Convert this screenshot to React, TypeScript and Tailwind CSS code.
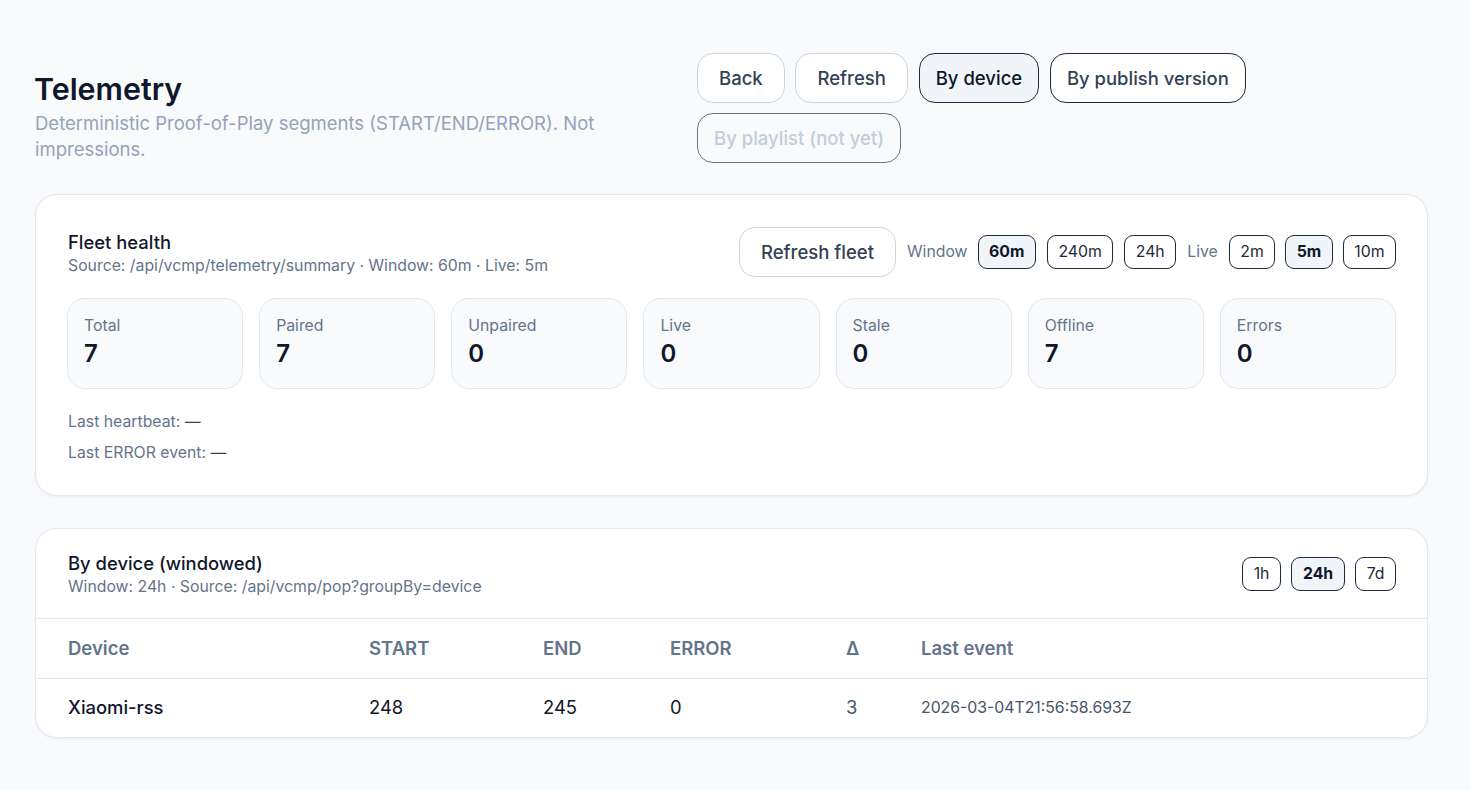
import React from "react";

function NavBtn({ label, active, outline, disabled }: { label: string; active?: boolean; outline?: boolean; disabled?: boolean }) {
  if (disabled)
    return (
      <button className="h-[50px] px-4 pt-[1px] rounded-[16px] border border-[#6b7280] bg-[#f8fafc] text-[18.5px] font-medium text-[#c4ccd8]">
        {label}
      </button>
    );
  if (active)
    return (
      <button className="h-[50px] px-4 pt-[1px] rounded-[16px] border border-[#1e293b] bg-[#f1f5f9] text-[18.5px] font-medium text-[#0f172a]">
        {label}
      </button>
    );
  if (outline)
    return (
      <button className="h-[50px] px-4 pt-[1px] rounded-[16px] border border-[#1e293b] bg-white text-[18.45px] font-medium text-[#334155]">
        {label}
      </button>
    );
  return (
    <button className="h-[50px] px-[21px] pt-[1px] rounded-[16px] border border-[#cbd5e1] bg-white text-[18.5px] font-medium text-[#334155]">
      {label}
    </button>
  );
}

function Chip({ label, active }: { label: string; active?: boolean }) {
  return (
    <button
      className={
        active
          ? "h-[34px] px-[10.5px] rounded-[9px] border border-[#1e293b] bg-[#f1f5f9] text-[15.8px] font-bold text-[#0f172a]"
          : "h-[34px] px-[10.5px] rounded-[9px] border border-[#1e293b] bg-white text-[15.8px] font-normal text-[#1e293b]"
      }
    >
      {label}
    </button>
  );
}

function Stat({ label, value }: { label: string; value: string }) {
  return (
    <div className="h-[91px] rounded-[18px] border border-[#e2e8f0] bg-[#f8fafc] px-4 pt-[17px]">
      <div className="text-[15.8px] leading-[20px] text-[#64748b]">{label}</div>
      <div className="mt-[2px] text-[24px] leading-[32px] font-semibold text-[#0f172a]">{value}</div>
    </div>
  );
}

export default function App() {
  return (
    <div className="min-h-[790px] bg-[#f8fafc] pl-[35px] pr-[42px] pt-[53px] font-['Inter',sans-serif]">
      <header className="flex">
        <div className="w-[662px] shrink-0 pt-[16px]">
          <h1 className="-ml-[1px] text-[30.4px] leading-[40px] font-semibold text-[#0f172a]">Telemetry</h1>
          <p className="mt-[1px] w-[590px] text-[18.5px] leading-[26px] text-[#94a3b8]">
            Deterministic Proof-of-Play segments (START/END/ERROR). Not impressions.
          </p>
        </div>
        <div className="flex flex-wrap gap-x-[10.8px] gap-y-[10px] w-[560px] content-start">
          <NavBtn label="Back" />
          <NavBtn label="Refresh" />
          <NavBtn label="By device" active />
          <NavBtn label="By publish version" outline />
          <NavBtn label="By playlist (not yet)" disabled />
        </div>
      </header>

      <section className="mt-[31px] h-[302px] rounded-[22px] border border-[#e2e8f0] bg-white px-[31px] pt-8 shadow-[0_1px_3px_rgba(15,23,42,0.06)]">
        <div className="flex items-center justify-between h-[50px]">
          <div className="pl-[1px] pt-[2px]">
            <div className="text-[18.4px] leading-[24px] font-medium text-[#0f172a]">Fleet health</div>
            <div className="mt-[2px] text-[15.8px] leading-[20px] text-[#64748b]">
              Source: /api/vcmp/telemetry/summary · Window: 60m · Live: 5m
            </div>
          </div>
          <div className="flex items-center">
            <button className="h-[50px] px-[21px] pt-[1px] mr-[11px] rounded-[16px] border border-[#cbd5e1] bg-white text-[18.5px] font-medium text-[#334155]">
              Refresh fleet
            </button>
            <span className="text-[15.8px] text-[#64748b] mr-[10px]">Window</span>
            <div className="flex gap-[11px]">
              <Chip label="60m" active />
              <Chip label="240m" />
              <Chip label="24h" />
            </div>
            <span className="text-[15.8px] text-[#64748b] ml-[11px] mr-[11px]">Live</span>
            <div className="flex gap-[10px]">
              <Chip label="2m" />
              <Chip label="5m" active />
              <Chip label="10m" />
            </div>
          </div>
        </div>
        <div className="mt-[21px] grid grid-cols-7 gap-4">
          <Stat label="Total" value="7" />
          <Stat label="Paired" value="7" />
          <Stat label="Unpaired" value="0" />
          <Stat label="Live" value="0" />
          <Stat label="Stale" value="0" />
          <Stat label="Offline" value="7" />
          <Stat label="Errors" value="0" />
        </div>
        <div className="mt-[23px] pl-[1px] text-[15.8px] leading-[20px] text-[#64748b]">
          Last heartbeat: <span className="text-[#334155]">—</span>
        </div>
        <div className="mt-[11px] pl-[1px] text-[15.8px] leading-[20px] text-[#64748b]">
          Last ERROR event: <span className="text-[#334155]">—</span>
        </div>
      </section>

      <section className="mt-[32px] rounded-[22px] border border-[#e2e8f0] bg-white shadow-[0_1px_3px_rgba(15,23,42,0.06)] overflow-hidden">
        <div className="flex items-center justify-between h-[89px] pl-8 pr-[31px] pt-[1px]">
          <div>
            <div className="text-[18.4px] leading-[24px] font-medium text-[#0f172a]">By device (windowed)</div>
            <div className="mt-[2px] text-[15.8px] leading-[20px] text-[#64748b]">
              Window: 24h · Source: /api/vcmp/pop?groupBy=device
            </div>
          </div>
          <div className="flex gap-[10.5px]">
            <Chip label="1h" />
            <Chip label="24h" active />
            <Chip label="7d" />
          </div>
        </div>
        <table className="w-full table-fixed border-collapse text-left">
          <colgroup>
            <col className="w-[333px]" />
            <col className="w-[174px]" />
            <col className="w-[127px]" />
            <col className="w-[176px]" />
            <col className="w-[75px]" />
            <col />
          </colgroup>
          <thead>
            <tr className="h-[60px] border-t border-b border-[#e2e8f0] text-[18.5px] font-semibold text-[#64748b]">
              <th className="pl-8 pt-[1px] font-semibold">Device</th>
              <th className="pt-[1px] font-semibold">START</th>
              <th className="pt-[1px] font-semibold">END</th>
              <th className="pt-[1px] font-semibold">ERROR</th>
              <th className="pt-[1px] font-semibold">Δ</th>
              <th className="pt-[1px] font-semibold">Last event</th>
            </tr>
          </thead>
          <tbody>
            <tr className="h-[58px] text-[18.4px] text-[#0f172a]">
              <td className="pl-8 font-medium">Xiaomi-rss</td>
              <td>248</td>
              <td>245</td>
              <td>0</td>
              <td className="text-[#475569]">3</td>
              <td className="text-[15.8px] text-[#475569]">2026-03-04T21:56:58.693Z</td>
            </tr>
          </tbody>
        </table>
      </section>
    </div>
  );
}
